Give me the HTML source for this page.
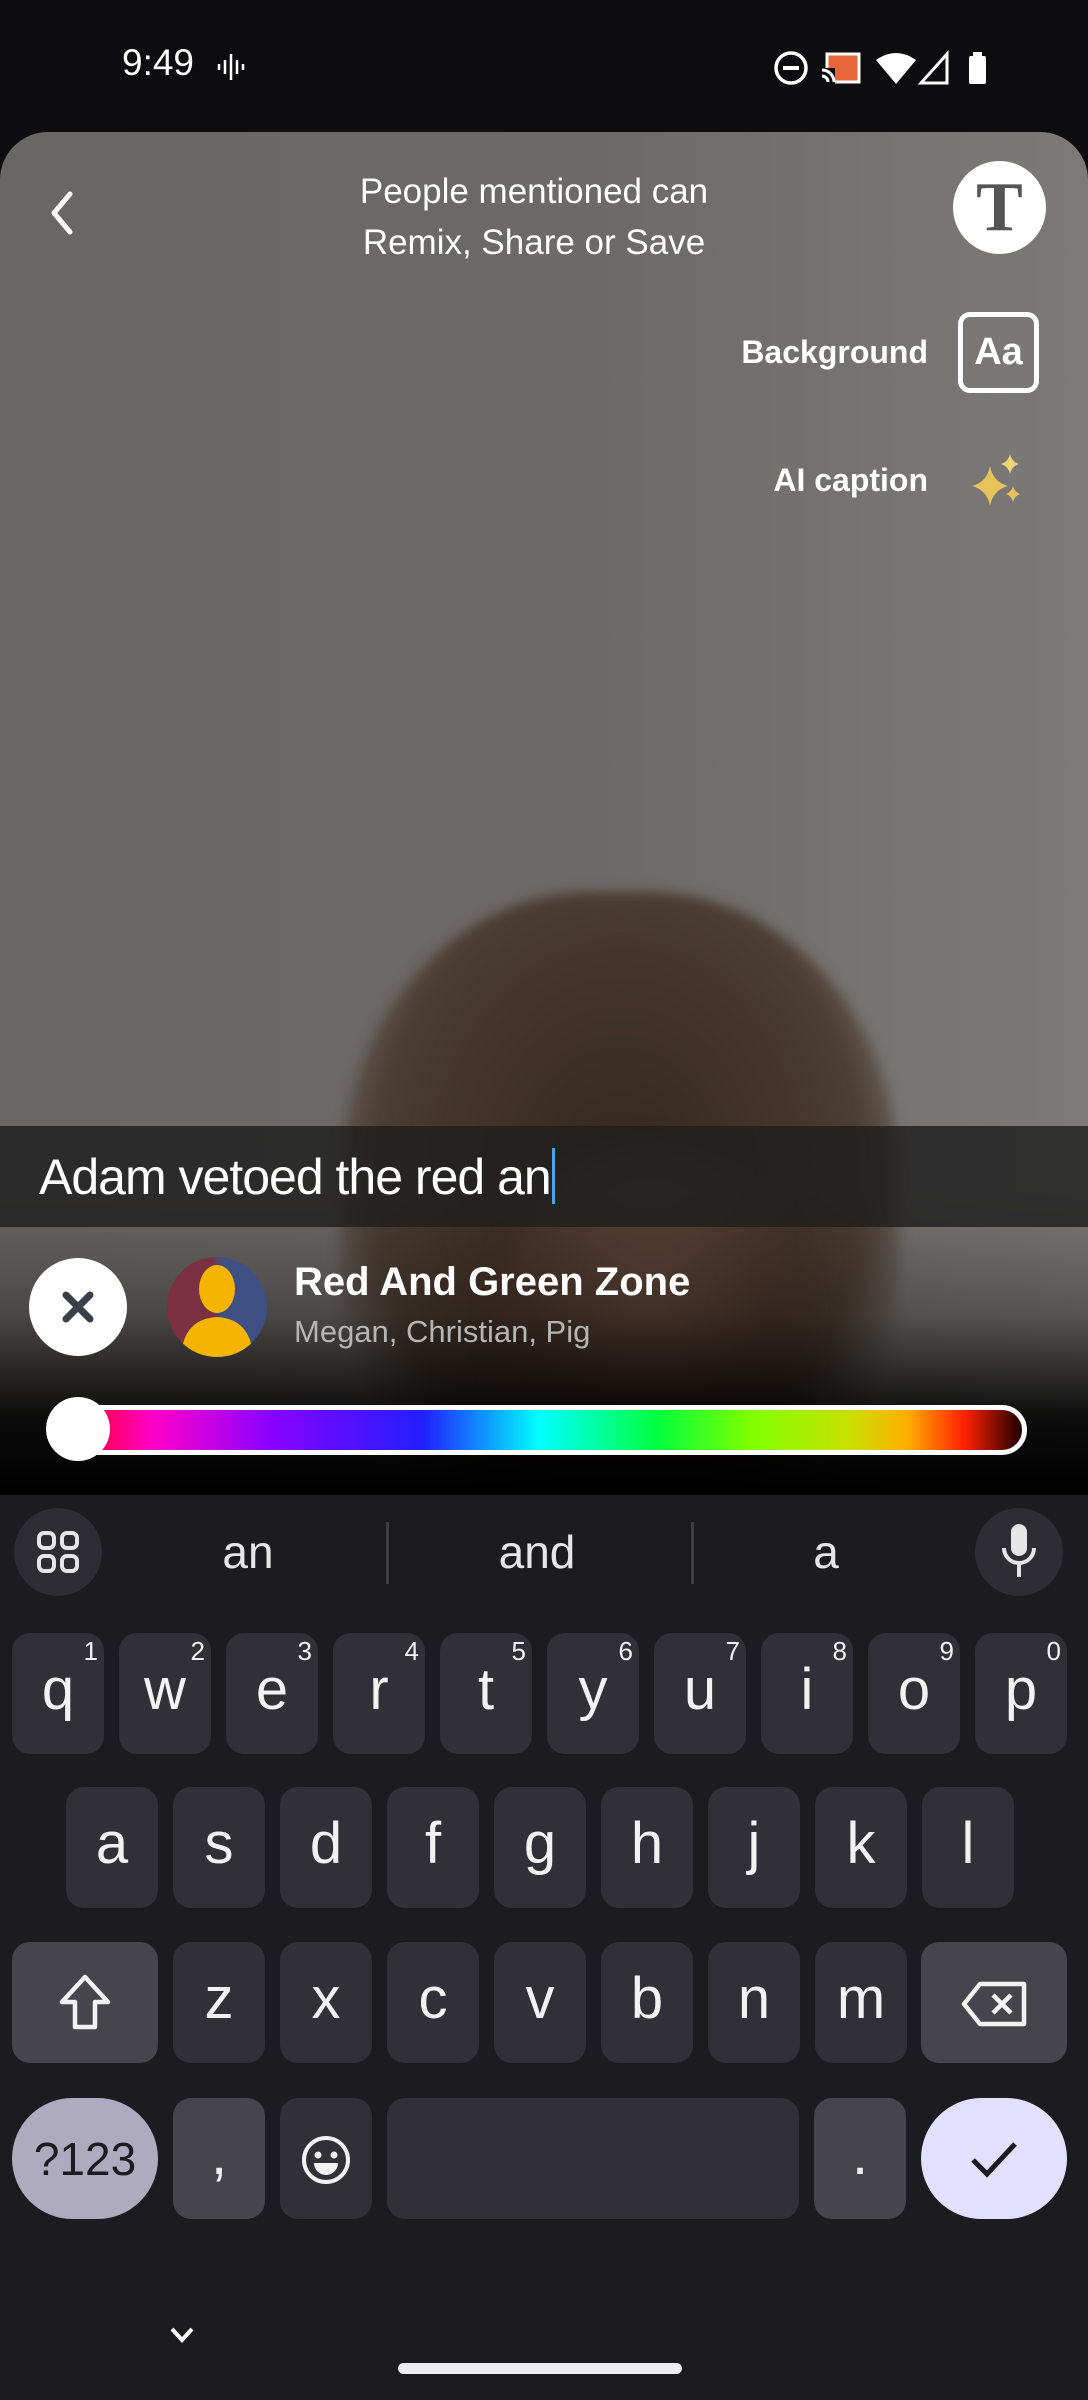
<!DOCTYPE html>
<html><head><meta charset="utf-8"><style>
*{margin:0;padding:0;box-sizing:border-box}
body{width:1088px;height:2400px;background:#0d0d0f;position:relative;overflow:hidden;font-family:"Liberation Sans",sans-serif;color:#fff}
.abs{position:absolute}
.cam{left:0;top:132px;width:1088px;height:1364px;border-radius:48px 48px 0 0;overflow:hidden;
background:linear-gradient(90deg,#6a6664 0%,#6d6967 55%,#767371 80%,#7c7a78 100%)}
.key{position:absolute;background:#313036;border-radius:18px;height:121px;width:92px;color:#f2f2f2;font-size:58px;text-align:center;line-height:114px}
.key sup{position:absolute;right:6px;top:4px;font-size:26px;line-height:28px}
.sp{background:#46454b}
</style></head><body>
<!-- status bar -->
<div class="abs" style="left:122px;top:42px;font-size:37px;">9:49</div>
<svg class="abs" style="left:216px;top:52px" width="30" height="30" viewBox="0 0 30 30" stroke="#fff" stroke-width="2.5"><path d="M3 12v6M9 8v14M15 2v26M21 8v14M27 12v6"/></svg>
<svg class="abs" style="left:772px;top:48px" width="220" height="40" viewBox="0 0 220 40">
<circle cx="19" cy="20" r="15" fill="none" stroke="#fff" stroke-width="3.5"/><rect x="11" y="18" width="16" height="4" fill="#fff"/>
<rect x="55" y="6" width="32" height="28" fill="#e8673a" stroke="#fff" stroke-width="3"/><rect x="49" y="20" width="14" height="16" fill="#0d0d0f"/><path d="M50 22a12 12 0 0 1 12 12M50 28a6 6 0 0 1 6 6" stroke="#fff" stroke-width="3" fill="none"/>
<path d="M104 12q20-14 40 0l-20 24z" fill="#fff"/>
<path d="M175 6v29h-26z" fill="none" stroke="#fff" stroke-width="3"/>
<rect x="197" y="8" width="17" height="28" rx="2" fill="#fff"/><rect x="201" y="4" width="9" height="5" fill="#fff"/>
</svg>
<!-- camera -->
<div class="abs cam">
 <div class="abs" style="left:340px;top:760px;width:560px;height:640px;border-radius:45% 45% 40% 40%;background:radial-gradient(ellipse at 50% 45%,#35271d 0%,#45352a 45%,rgba(70,54,42,0.85) 62%,rgba(90,80,70,0) 78%);filter:blur(6px)"></div>
 <div class="abs" style="left:490px;top:1010px;width:320px;height:380px;border-radius:50%;background:radial-gradient(ellipse at 50% 40%,#5e4538 0%,#4c382e 50%,rgba(60,45,38,0) 80%);filter:blur(10px)"></div>
 <div class="abs" style="left:0;top:1060px;width:1088px;height:304px;background:linear-gradient(180deg,rgba(0,0,0,0) 0%,rgba(0,0,0,0.3) 40%,rgba(0,0,0,0.9) 75%,#000 100%)"></div>
 <div class="abs" style="left:0;top:994px;width:1088px;height:101px;background:rgba(30,30,30,0.82)"></div>
</div>
<!-- top controls -->
<svg class="abs" style="left:46px;top:190px" width="30" height="46" viewBox="0 0 30 46"><path d="M24 4L8 23l16 19" stroke="#fff" stroke-width="5" fill="none" stroke-linecap="round" stroke-linejoin="round"/></svg>
<div class="abs" style="left:284px;top:166px;width:500px;text-align:center;font-size:35px;line-height:51px">People mentioned can<br>Remix, Share or Save</div>
<div class="abs" style="left:953px;top:161px;width:93px;height:93px;border-radius:50%;background:#fff;color:#555;font-family:'Liberation Serif',serif;font-weight:bold;font-size:70px;text-align:center;line-height:93px">T</div>
<div class="abs" style="left:640px;top:334px;width:288px;text-align:right;font-size:32px;font-weight:bold">Background</div>
<div class="abs" style="left:958px;top:312px;width:81px;height:81px;border:5px solid #fff;border-radius:12px;font-size:38px;font-weight:bold;text-align:center;line-height:70px">Aa</div>
<div class="abs" style="left:640px;top:462px;width:288px;text-align:right;font-size:32px;font-weight:bold">AI caption</div>
<svg class="abs" style="left:968px;top:452px" width="56" height="56" viewBox="0 0 56 56"><path d="M22 14q3 16 18 20q-15 4-18 20q-3-16-18-20q15-4 18-20z" fill="#e8c25a"/><path d="M42 2q2 8 9 10q-7 2-9 10q-2-8-9-10q7-2 9-10z" fill="#f1d27a"/><path d="M45 34q1.5 6 7 8q-5.5 2-7 8q-1.5-6-7-8q5.5-2 7-8z" fill="#e8c25a"/></svg>
<!-- text -->
<div class="abs" style="left:39px;top:1148px;font-size:50px;white-space:nowrap;letter-spacing:-1px">Adam vetoed the red an<span style="display:inline-block;width:3px;height:56px;background:#4aa6e8;vertical-align:-10px;margin-left:1px"></span></div>
<!-- mention -->
<div class="abs" style="left:29px;top:1258px;width:98px;height:98px;border-radius:50%;background:#fff"></div>
<svg class="abs" style="left:60px;top:1289px" width="36" height="36" viewBox="0 0 36 36"><path d="M6 6l24 24M30 6L6 30" stroke="#3a3f4a" stroke-width="7" stroke-linecap="round"/></svg>
<div class="abs" style="left:167px;top:1257px;width:100px;height:100px;border-radius:50%;overflow:hidden;background:linear-gradient(90deg,#7a3040 0 45%,#3e4f84 55%)">
<svg width="100" height="100" viewBox="0 0 100 100"><ellipse cx="50" cy="32" rx="18" ry="24" fill="#f4b400"/><path d="M14 100q2-38 36-40q34 2 36 40z" fill="#f4b400"/></svg></div>
<div class="abs" style="left:294px;top:1260px;font-size:40px;font-weight:bold">Red And Green Zone</div>
<div class="abs" style="left:294px;top:1314px;font-size:31px;color:#b5b5b5">Megan, Christian, Pig</div>
<!-- slider -->
<div class="abs" style="left:52px;top:1405px;width:975px;height:50px;border-radius:25px;border:5px solid #fff;background:linear-gradient(90deg,#ff0000 0%,#ff00c8 10%,#8a00ff 22%,#2020ff 38%,#00ffff 50%,#00ff40 62%,#80ff00 72%,#c8e000 82%,#ffb000 88%,#ff2000 94%,#200000 100%)"></div>
<div class="abs" style="left:46px;top:1397px;width:64px;height:64px;border-radius:50%;background:#fff"></div>
<!-- keyboard -->
<div class="abs" style="left:0;top:1495px;width:1088px;height:905px;background:#1c1b20"></div>
<div class="abs" style="left:14px;top:1508px;width:88px;height:88px;border-radius:50%;background:#2e2d33"></div>
<svg class="abs" style="left:36px;top:1530px" width="44" height="44" viewBox="0 0 44 44" fill="none" stroke="#e6e6e6" stroke-width="4"><rect x="3" y="3" width="15" height="15" rx="5"/><rect x="26" y="3" width="15" height="15" rx="5"/><rect x="3" y="26" width="15" height="15" rx="5"/><rect x="26" y="26" width="15" height="15" rx="5"/></svg>
<div class="abs" style="left:148px;top:1525px;width:200px;text-align:center;font-size:46px;color:#e6e6e6">an</div>
<div class="abs" style="left:386px;top:1522px;width:3px;height:62px;background:#3d3c42"></div>
<div class="abs" style="left:437px;top:1525px;width:200px;text-align:center;font-size:46px;color:#e6e6e6">and</div>
<div class="abs" style="left:691px;top:1522px;width:3px;height:62px;background:#3d3c42"></div>
<div class="abs" style="left:726px;top:1525px;width:200px;text-align:center;font-size:46px;color:#e6e6e6">a</div>
<div class="abs" style="left:975px;top:1508px;width:88px;height:88px;border-radius:50%;background:#2e2d33"></div>
<svg class="abs" style="left:999px;top:1522px" width="40" height="60" viewBox="0 0 40 60"><rect x="12" y="2" width="16" height="32" rx="8" fill="#e6e6e6"/><path d="M5 26a15 15 0 0 0 30 0M20 41v14" stroke="#e6e6e6" stroke-width="4" fill="none"/></svg>

<div class="key" style="left:12px;top:1633px">q<sup>1</sup></div>
<div class="key" style="left:119px;top:1633px">w<sup>2</sup></div>
<div class="key" style="left:226px;top:1633px">e<sup>3</sup></div>
<div class="key" style="left:333px;top:1633px">r<sup>4</sup></div>
<div class="key" style="left:440px;top:1633px">t<sup>5</sup></div>
<div class="key" style="left:547px;top:1633px">y<sup>6</sup></div>
<div class="key" style="left:654px;top:1633px">u<sup>7</sup></div>
<div class="key" style="left:761px;top:1633px">i<sup>8</sup></div>
<div class="key" style="left:868px;top:1633px">o<sup>9</sup></div>
<div class="key" style="left:975px;top:1633px">p<sup>0</sup></div>

<div class="key" style="left:66px;top:1787px">a</div>
<div class="key" style="left:173px;top:1787px">s</div>
<div class="key" style="left:280px;top:1787px">d</div>
<div class="key" style="left:387px;top:1787px">f</div>
<div class="key" style="left:494px;top:1787px">g</div>
<div class="key" style="left:601px;top:1787px">h</div>
<div class="key" style="left:708px;top:1787px">j</div>
<div class="key" style="left:815px;top:1787px">k</div>
<div class="key" style="left:922px;top:1787px">l</div>

<div class="key sp" style="left:12px;top:1942px;width:146px"><svg style="margin-top:30px" width="60" height="62" viewBox="0 0 60 62"><path d="M30 5L7 30h13v25h20V30h13z" fill="none" stroke="#f2f2f2" stroke-width="4.5" stroke-linejoin="round"/></svg></div>
<div class="key" style="left:173px;top:1942px">z</div>
<div class="key" style="left:280px;top:1942px">x</div>
<div class="key" style="left:387px;top:1942px">c</div>
<div class="key" style="left:494px;top:1942px">v</div>
<div class="key" style="left:601px;top:1942px">b</div>
<div class="key" style="left:708px;top:1942px">n</div>
<div class="key" style="left:815px;top:1942px">m</div>
<div class="key sp" style="left:921px;top:1942px;width:146px"><svg style="margin-top:38px" width="68" height="48" viewBox="0 0 68 48"><path d="M20 4h44v40H20L4 24z" fill="none" stroke="#f2f2f2" stroke-width="4.5" stroke-linejoin="round"/><path d="M33 15l18 18M51 15L33 33" stroke="#f2f2f2" stroke-width="4.5"/></svg></div>

<div class="key" style="left:12px;top:2098px;width:146px;border-radius:62px;background:#aeabc0;color:#1c1b20;font-size:46px;line-height:122px">?123</div>
<div class="key sp" style="left:173px;top:2098px">,</div>
<div class="key" style="left:280px;top:2098px"><svg style="margin-top:36px" width="52" height="52" viewBox="0 0 52 52"><circle cx="26" cy="26" r="22" fill="none" stroke="#f2f2f2" stroke-width="4"/><circle cx="18" cy="21" r="3.5" fill="#f2f2f2"/><circle cx="34" cy="21" r="3.5" fill="#f2f2f2"/><path d="M14 29h24a12 12 0 0 1-24 0z" fill="#f2f2f2"/></svg></div>
<div class="key" style="left:387px;top:2098px;width:412px"></div>
<div class="key sp" style="left:814px;top:2098px">.</div>
<div class="key" style="left:921px;top:2098px;width:146px;border-radius:62px;background:#e3dfff"><svg style="margin-top:40px" width="50" height="42" viewBox="0 0 50 42"><path d="M4 22l14 14L46 6" fill="none" stroke="#1c1b20" stroke-width="5"/></svg></div>

<svg class="abs" style="left:168px;top:2325px" width="28" height="20" viewBox="0 0 28 20"><path d="M4 4l10 11L24 4" fill="none" stroke="#fff" stroke-width="4"/></svg>
<div class="abs" style="left:398px;top:2363px;width:284px;height:11px;border-radius:6px;background:#eeeeee"></div>
</body></html>
